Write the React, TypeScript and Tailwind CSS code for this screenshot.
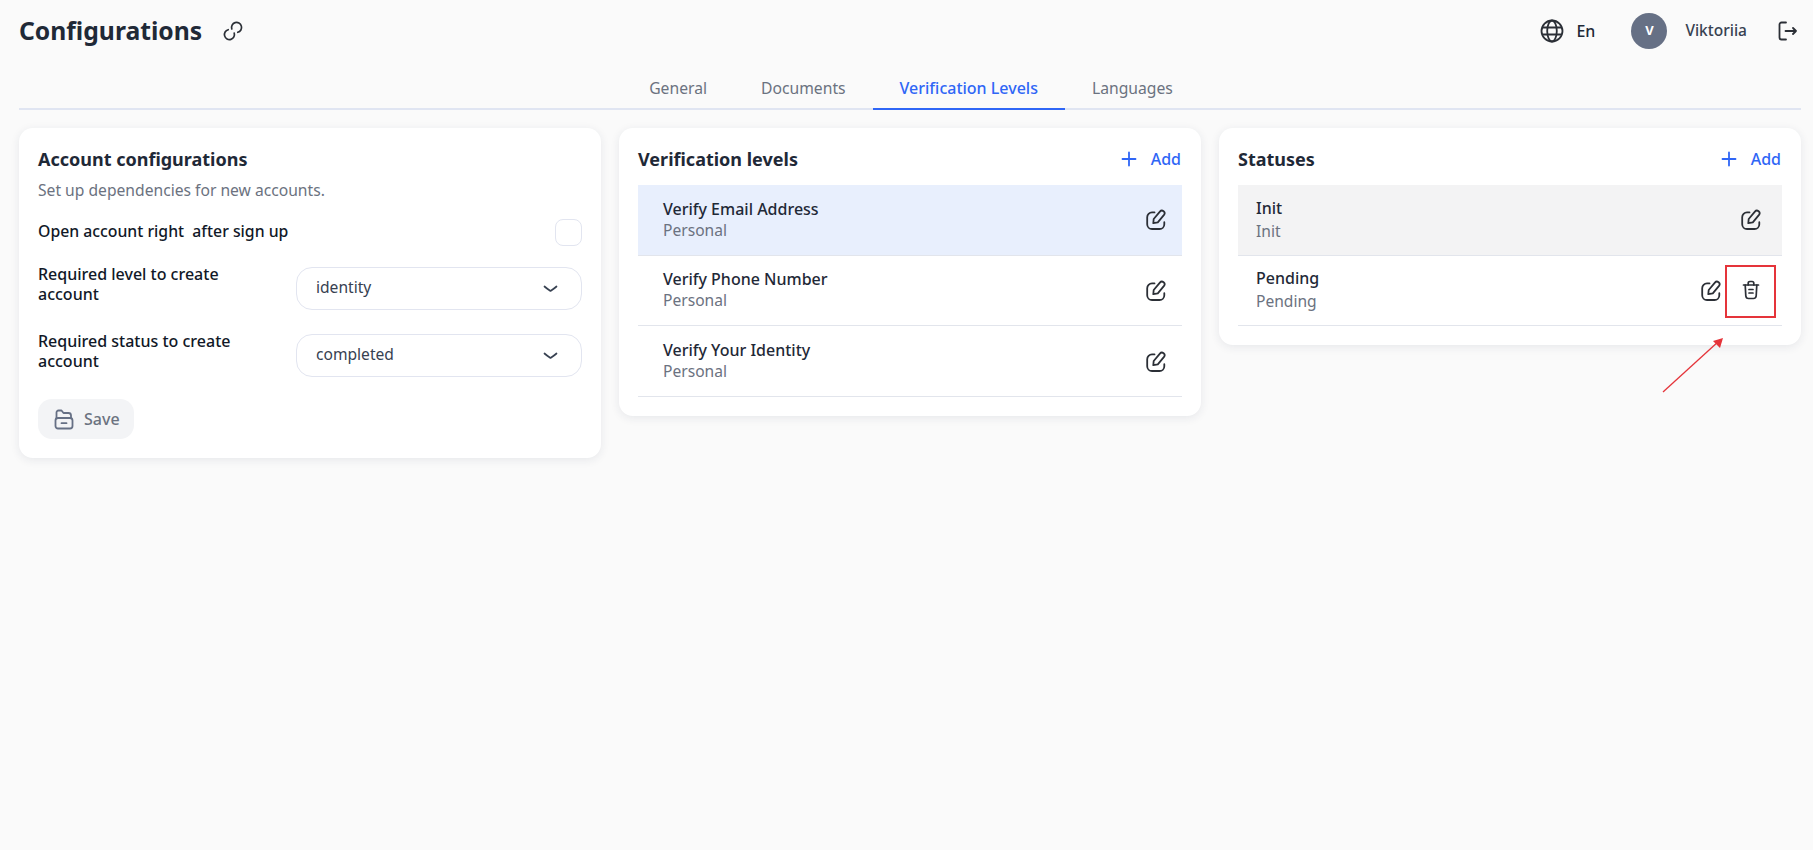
import type { ReactNode } from 'react';

const levels = ['Verify Email Address', 'Verify Phone Number', 'Verify Your Identity'];
const tabs = ['General', 'Documents', 'Verification Levels', 'Languages'];

function EditIcon() {
  return (
    <svg width="20" height="21" viewBox="0 0 20 21" fill="none" stroke="#2b2f36" strokeWidth="1.800" strokeLinecap="round" strokeLinejoin="round">
      <path d="M8.500 3.400H6C3.300 3.400 1.200 5.500 1.200 8.200v7c0 2.700 2.100 4.800 4.800 4.800h7.500c2.700 0 4.800-2.100 4.800-4.800v-2" />
      <path d="M7.300 14.200l.4-4.200 6.200-7.400c1-1.200 2.500-1.300 3.700-.4 1.200 1 1.300 2.500.4 3.700l-6.200 7.400-4.500.9z" />
    </svg>
  );
}

function TrashIcon() {
  return (
    <svg width="18" height="20" viewBox="0 0 18 20" fill="none" stroke="#2b2f36" strokeWidth="1.700" strokeLinecap="round" strokeLinejoin="round">
      <path d="M1.500 5h15" />
      <path d="M6.200 5V3.200C6.200 2.200 6.900 1.500 7.900 1.500h2.200c1 0 1.700.7 1.700 1.700V5" />
      <path d="M3.200 5l.6 10.800c.1 1.500 1.200 2.700 2.700 2.700h5c1.500 0 2.600-1.200 2.700-2.700L14.800 5" />
      <path d="M7 9.500h4M7 13h4" />
    </svg>
  );
}

function PlusIcon() {
  return (
    <svg width="16" height="16" viewBox="0 0 16 16" fill="none" stroke="#2f66f6" strokeWidth="1.800" strokeLinecap="round">
      <path d="M8 1.500v13M1.500 8h13" />
    </svg>
  );
}

function Chevron() {
  return (
    <svg width="15" height="8" viewBox="0 0 15 8" fill="none" stroke="#374151" strokeWidth="1.700" strokeLinecap="round" strokeLinejoin="round">
      <path d="M1.500 1.500c2 1.800 4 3.200 6 4.500 2-1.300 4-2.700 6-4.500" />
    </svg>
  );
}

function Card({ children }: { children: ReactNode }) {
  return (
    <div className="rounded-[14px] bg-white p-[19px] shadow-[0_2px_10px_rgba(30,41,80,0.09)]">
      {children}
    </div>
  );
}

function CardHead({ title }: { title: string }) {
  return (
    <div className="mb-[12px] flex h-[24px] items-center justify-between">
      <h2 className="text-[18px] font-bold text-[#1f2937]">{title}</h2>
      <button className="flex items-center gap-[14px] pr-px text-[16px] font-medium text-[#2f66f6]">
        <PlusIcon />
        Add
      </button>
    </div>
  );
}

function SelectRow({ label, value, className }: { label: string; value: string; className: string }) {
  return (
    <div className={`flex items-start justify-between ${className}`}>
      <div className="-mt-[3px] w-[220px] text-[16px] leading-[20px] font-medium text-[#111827]">{label}</div>
      <div className="flex h-[43px] w-[286px] items-center justify-between rounded-[16px] border border-[#e2e5f0] bg-white pr-[23px] pl-[19px] text-[15.6px] text-[#374151]">
        <span className="pb-px">{value}</span>
        <Chevron />
      </div>
    </div>
  );
}

function Row({ title, sub, leading, className, children }: { title: string; sub: string; leading: string; className: string; children: ReactNode }) {
  return (
    <div className={`flex h-[70.67px] items-center justify-between border-b border-[#e2e5ec] ${className}`}>
      <div className={leading}>
        <div className="text-[16px] font-medium text-[#1f2937]">{title}</div>
        <div className="text-[15.6px] text-[#6b7280]">{sub}</div>
      </div>
      {children}
    </div>
  );
}

export default function App() {
  return (
    <div className="relative min-h-[850px] bg-[#fafafa] pr-[12px] pl-[19px] font-['Noto_Sans',sans-serif]">
      <header className="flex h-[62px] items-center">
        <h1 className="text-[24.7px] font-bold text-[#1f2937]">Configurations</h1>
        <svg className="ml-[21px]" width="20" height="20" viewBox="0 0 20 20" fill="none" stroke="#2b2f36" strokeWidth="1.700" strokeLinecap="round">
          <path d="M8.800 8A5 5 0 1 1 14.800 11.300" />
          <path d="M11.200 12A5 5 0 1 1 5.200 8.700" />
        </svg>
        <div className="ml-auto flex items-center pr-[4px]">
          <svg width="24" height="24" viewBox="0 0 24 24" fill="none" stroke="#2b2f36" strokeWidth="1.800">
            <circle cx="12" cy="12" r="10.500" />
            <ellipse cx="12" cy="12" rx="4.800" ry="10.500" />
            <path d="M2.300 8.500h19.400M2.300 15.500h19.400" />
          </svg>
          <span className="ml-[12px] text-[16px] font-medium text-[#1f2937]">En</span>
          <div className="ml-[36px] flex h-[36px] w-[36px] items-center justify-center rounded-full bg-[#667085] text-[13px] font-bold text-white">V</div>
          <span className="ml-[18px] text-[15.5px] font-medium text-[#374151]">Viktoriia</span>
          <svg className="ml-[31px]" width="19" height="20" viewBox="0 0 19 20" fill="none" stroke="#2b2f36" strokeWidth="1.800" strokeLinecap="round" strokeLinejoin="round">
            <path d="M8 1.500H3.500a2 2 0 0 0-2 2v13a2 2 0 0 0 2 2H8" />
            <path d="M7.500 10h10.500M15 7l3 3-3 3" />
          </svg>
        </div>
      </header>

      <nav className="flex h-[48px] justify-center border-b-2 border-[#e0e5f2] pl-[2px]">
        {tabs.map((tab) => (
          <div
            key={tab}
            className={
              tab === 'Verification Levels'
                ? "-mb-[2px] flex h-[48px] items-center border-b-2 border-[#2f66f6] px-[27px] pt-[5px] text-[16px] font-medium text-[#2f66f6]"
                : "flex h-[46px] items-center px-[27px] pt-[7px] text-[15.7px] text-[#6b7280]"
            }
          >
            {tab}
          </div>
        ))}
      </nav>

      <main className="mt-[18px] grid grid-cols-3 items-start gap-[18px]">
        <Card>
          <h2 className="h-[26px] text-[18px] leading-[24px] font-bold text-[#1f2937]">Account configurations</h2>
          <p className="mt-[6px] text-[15.65px] leading-[22px] text-[#6b7280]">Set up dependencies for new accounts.</p>
          <div className="mt-[18px] flex h-[27px] items-center justify-between">
            <span className="pb-[2px] text-[15.8px] font-medium whitespace-pre text-[#111827]">Open account right  after sign up</span>
            <div className="h-[27px] w-[27px] rounded-[8px] border border-[#e2e5f0] bg-white" />
          </div>
          <SelectRow label="Required level to create account" value="identity" className="mt-[21px]" />
          <SelectRow label="Required status to create account" value="completed" className="mt-[24px]" />
          <button className="mt-[22px] flex h-[40px] w-[96px] items-center gap-[10px] rounded-[14px] bg-[#f3f4f6] pl-[16px] text-[16px] font-medium text-[#6b7280]">
            <svg width="20" height="21" viewBox="0 0 20 21" fill="none" stroke="#667085" strokeWidth="1.800" strokeLinecap="round" strokeLinejoin="round">
              <path d="M2.500 9V3.500a2 2 0 0 1 2-2h3l2 2.500h5a2.500 2.500 0 0 1 2.500 2.500V9" />
              <rect x="1.500" y="9" width="17" height="10.500" rx="2.500" />
              <path d="M7.500 14.200h5" />
            </svg>
            Save
          </button>
        </Card>

        <Card>
          <CardHead title="Verification levels" />
          <div className="mt-[14px]">
            {levels.map((level, i) => (
              <Row key={level} title={level} sub="Personal" leading="leading-[21px]" className={`pr-[16px] pl-[25px] ${i === 0 ? 'bg-[#e8effd]' : ''}`}>
                <EditIcon />
              </Row>
            ))}
          </div>
        </Card>

        <Card>
          <CardHead title="Statuses" />
          <div className="mt-[14px]">
            <Row title="Init" sub="Init" leading="leading-[23px]" className="bg-[#f3f3f4] pr-[21px] pl-[18px]">
              <EditIcon />
            </Row>
            <Row title="Pending" sub="Pending" leading="leading-[23px]" className="pr-[22px] pl-[18px]">
              <div className="flex items-center gap-[21px]">
                <EditIcon />
                <TrashIcon />
              </div>
            </Row>
          </div>
        </Card>
      </main>

      {/* screenshot annotation drawn over the page */}
      <div className="absolute top-[265px] left-[1725px] h-[53px] w-[51px] border-2 border-[#e5343a]" />
      <svg className="absolute top-[335px] left-[1660px]" width="66" height="60" viewBox="0 0 66 60" fill="none">
        <path d="M3 57L59 6" stroke="#e5343a" strokeWidth="1.300" />
        <path d="M63 3l-3 10-7-7z" fill="#e5343a" />
      </svg>
    </div>
  );
}
